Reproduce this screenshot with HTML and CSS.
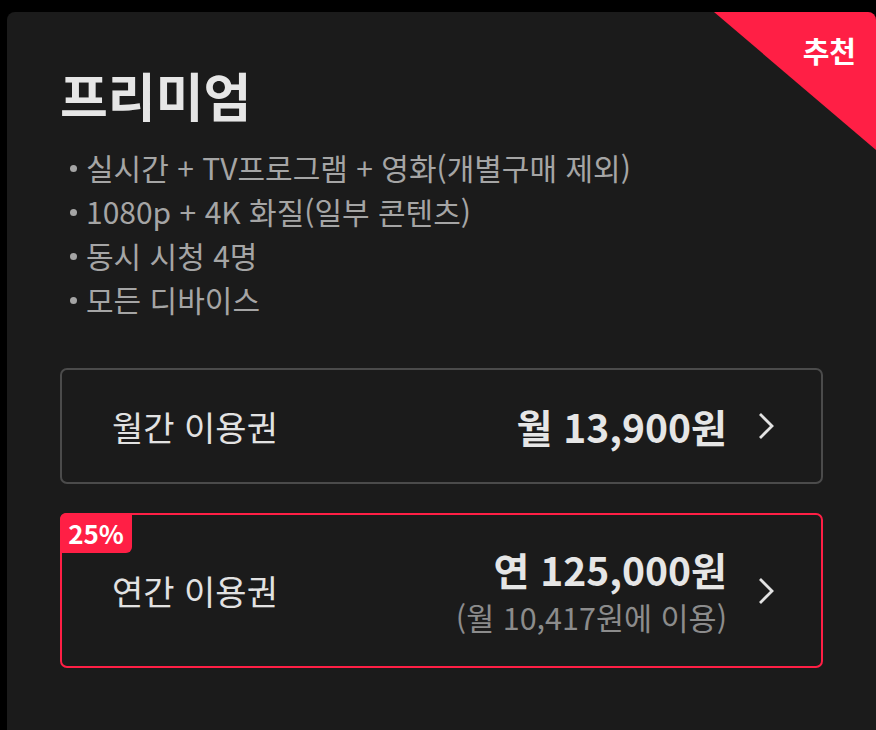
FILE: index.html
```html
<!DOCTYPE html>
<html lang="ko">
<head>
  <meta charset="UTF-8">
  <meta name="viewport" content="width=device-width, initial-scale=1.0">
  <title>프리미엄 이용권</title>
  <link rel="stylesheet" href="styles.css">
</head>
<body>
  <div class="card">
    <div class="ribbon"><span>추천</span></div>

    <h2 class="plan-name">프리미엄</h2>
    <ul class="features">
      <li>실시간 + TV프로그램 + 영화(개별구매 제외)</li>
      <li>1080p + 4K 화질(일부 콘텐츠)</li>
      <li>동시 시청 4명</li>
      <li>모든 디바이스</li>
    </ul>

    <div class="option">
      <span class="option-name">월간 이용권</span>
      <div class="option-price">
        <span class="price">월 13,900원</span>
      </div>
      <svg class="chevron" width="18" height="28" viewBox="0 0 18 28">
        <path d="M3 2 L15 14 L3 26" fill="none" stroke="#e2e2e2" stroke-width="2.8"/>
      </svg>
    </div>

    <div class="option option-yearly">
      <span class="discount">25%</span>
      <span class="option-name">연간 이용권</span>
      <div class="option-price">
        <span class="price">연 125,000원</span>
        <span class="price-note">(월 10,417원에 이용)</span>
      </div>
      <svg class="chevron" width="18" height="28" viewBox="0 0 18 28">
        <path d="M3 2 L15 14 L3 26" fill="none" stroke="#e2e2e2" stroke-width="2.8"/>
      </svg>
    </div>
  </div>
</body>
</html>
```

FILE: styles.css
```css
body {
  margin: 0;
  padding: 12px 0 0 7px;
  background-color: #000;
  font-family: "Noto Sans CJK KR", "Noto Sans", sans-serif;
  overflow: hidden;
}

.card {
  position: relative;
  background-color: #1b1b1b;
  border-radius: 8px;
  padding: 54px 53px 60px 53px;
  min-height: 700px;
  overflow: hidden;
}

.ribbon {
  position: absolute;
  top: 0;
  right: 0;
  width: 162px;
  height: 138px;
  background-color: #ff1f45;
  clip-path: polygon(0 0, 100% 0, 100% 100%);
}

.ribbon span {
  position: absolute;
  top: 18px;
  right: 20px;
  color: #fff;
  font-size: 29px;
  font-weight: bold;
  line-height: 1.4;
}

.plan-name {
  margin: 0;
  font-size: 52px;
  line-height: 58px;
  font-weight: bold;
  color: #e6e6e6;
}

.features {
  list-style: none;
  margin: 21px 0 0 0;
  padding: 0;
}

.features li {
  position: relative;
  padding-left: 26px;
  font-size: 30px;
  line-height: 44px;
  color: #a5a5a5;
}

.features li::before {
  content: "";
  position: absolute;
  left: 10px;
  top: 20px;
  width: 7px;
  height: 7px;
  border-radius: 50%;
  background-color: #a5a5a5;
}

.option {
  position: relative;
  display: flex;
  align-items: center;
  height: 112px;
  margin-top: 47px;
  padding: 0 46px 0 50px;
  border: 2px solid #4b4b4b;
  border-radius: 7px;
}

.option-yearly {
  height: 151px;
  margin-top: 29px;
  border-color: #ff1f45;
}

.option-name {
  flex: 1;
  font-size: 34px;
  color: #e2e2e2;
}

.option-price {
  display: flex;
  flex-direction: column;
  align-items: flex-end;
  margin-right: 30px;
}

.price {
  font-size: 39px;
  font-weight: bold;
  line-height: 46px;
  color: #e6e6e6;
}

.price-note {
  padding-top: 6px;
  font-size: 30.5px;
  line-height: 38px;
  color: #8c8c8c;
}

.discount {
  position: absolute;
  top: -2px;
  left: -2px;
  width: 72px;
  height: 40px;
  background-color: #ff1f45;
  border-radius: 6px 0 6px 0;
  color: #fff;
  font-size: 26px;
  font-weight: bold;
  line-height: 40px;
  text-align: center;
}

.chevron {
  display: block;
}
```
